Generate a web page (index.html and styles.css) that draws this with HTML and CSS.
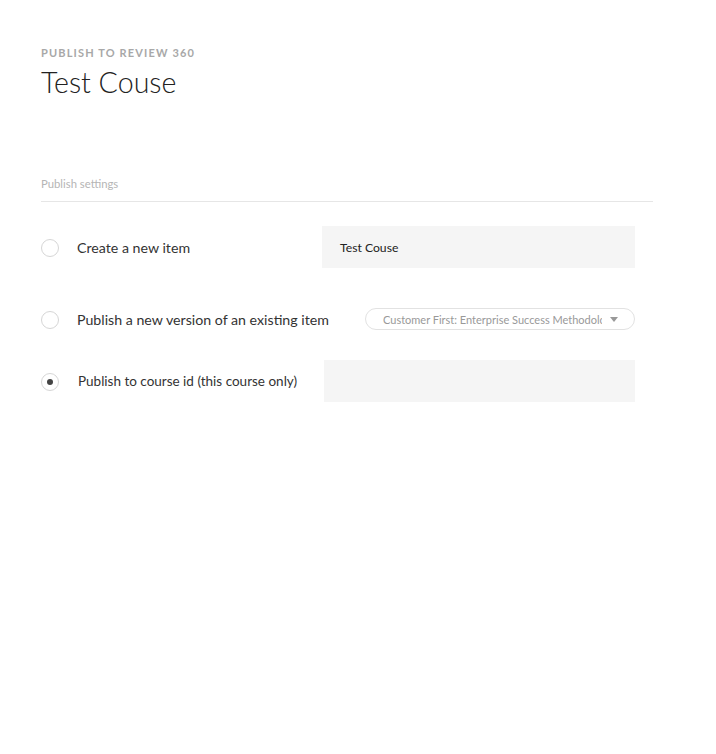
FILE: index.html
```html
<!DOCTYPE html>
<html lang="en">
<head>
    <meta charset="UTF-8">
    <title>Publish to Review 360</title>
    <link rel="stylesheet" href="styles.css">
</head>
<body>
    <div class="page">
        <div class="eyebrow">PUBLISH TO REVIEW 360</div>
        <h1 class="title">Test Couse</h1>

        <div class="section-label">Publish settings</div>

        <div class="option first">
            <span class="radio"></span>
            <span class="option-text">Create a new item</span>
            <div class="text-field wide">Test Couse</div>
        </div>

        <div class="option second">
            <span class="radio"></span>
            <span class="option-text">Publish a new version of an existing item</span>
            <div class="select">
                <span class="select-text">Customer First: Enterprise Success Methodology</span>
                <span class="caret"></span>
            </div>
        </div>

        <div class="option third">
            <span class="radio checked"></span>
            <span class="option-text small">Publish to course id (this course only)</span>
            <div class="text-field course"></div>
        </div>
    </div>
</body>
</html>
```

FILE: styles.css
```css
body {
    margin: 0;
    background-color: #fff;
    font-family: 'Lato', sans-serif;
    color: #333;
}
.page {
    width: 612px;
    padding: 46px 0 0 41px;
}
.eyebrow {
    font-size: 11px;
    font-weight: bold;
    letter-spacing: 1.15px;
    color: #a8a8a8;
    line-height: 14px;
}
.title {
    margin: 4px 0 0 0;
    font-size: 28.6px;
    font-weight: 300;
    line-height: 36px;
    color: #222;
}
.section-label {
    margin-top: 77px;
    font-size: 11.3px;
    color: #b5b5b5;
    padding-bottom: 11px;
    border-bottom: 1px solid #e6e6e6;
}
.option {
    display: flex;
    align-items: center;
    height: 42px;
    padding-right: 18px;
}
.option.first { margin-top: 24px; }
.option.second { margin-top: 30px; }
.option.third { margin-top: 20px; }
.radio {
    width: 16px;
    height: 16px;
    border: 1px solid #d6d6d6;
    border-radius: 50%;
    flex-shrink: 0;
    display: flex;
    align-items: center;
    justify-content: center;
    margin-top: 2px;
}
.radio.checked::after {
    content: "";
    width: 6px;
    height: 6px;
    border-radius: 50%;
    background-color: #444;
}
.option-text {
    margin-left: 18px;
    font-size: 14.2px;
    color: #333;
}
.option-text.small {
    font-size: 13.5px;
    margin-left: 19px;
}
.text-field {
    margin-left: auto;
    height: 42px;
    background-color: #f5f5f5;
    box-sizing: border-box;
    padding-left: 18px;
    display: flex;
    align-items: center;
    font-size: 12.2px;
    color: #222;
}
.text-field.wide { width: 313px; }
.text-field.course { width: 311px; }
.select {
    margin-left: auto;
    width: 270px;
    height: 22px;
    box-sizing: border-box;
    border: 1px solid #e2e2e2;
    border-radius: 11px;
    display: flex;
    align-items: center;
    padding: 0 16px 0 17px;
    font-size: 11px;
    color: #999;
}
.select-text {
    flex: 1;
    white-space: nowrap;
    overflow: hidden;
}
.caret {
    margin-left: 8px;
    width: 0;
    height: 0;
    border-left: 4px solid transparent;
    border-right: 4px solid transparent;
    border-top: 5px solid #999;
}
```
